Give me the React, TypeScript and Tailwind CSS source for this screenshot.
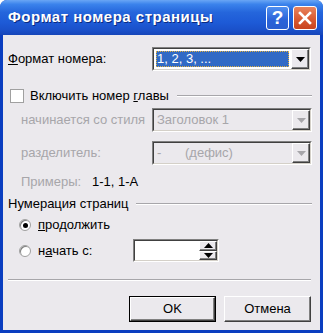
import React from 'react';

const sunken = 'border-t-[#808080] border-l-[#808080] border-b-white border-r-white border';
const raised = 'border border-t-white border-l-white border-b-[#404040] border-r-[#404040] shadow-[inset_-1px_-1px_0_#808080]';

const Arrow = ({ color = '#000' }: { color?: string }) => (
  <svg width="9" height="5" viewBox="0 0 9 5"><path d="M0 0h9L4.5 5z" fill={color} /></svg>
);

const Combo = ({ text, width, active, disabled }: { text: React.ReactNode; width: string; active?: boolean; disabled?: boolean }) => (
  <div className={`${width} h-[24px] ${sunken} bg-white`}>
    <div className="h-full flex border border-t-[#404040] border-l-[#404040] border-b-[#d4d0c8] border-r-[#d4d0c8]">
      <div className={`flex-1 flex items-center p-[2px] ${disabled ? 'bg-[#ebe9ed]' : 'bg-white'}`}>
        <div className={`h-full w-full flex items-center pl-[1px] ${active ? 'bg-[#316ac5] text-white outline-1 outline-dotted outline-[#e0b040] -outline-offset-1' : ''} ${disabled ? 'text-[#a7a6aa]' : ''}`}>{text}</div>
      </div>
      <div className={`w-[18px] ${raised} bg-[#ebe9ed] flex items-center justify-center`}>
        <Arrow color={disabled ? '#a7a6aa' : '#000'} />
      </div>
    </div>
  </div>
);

const Line = () => (
  <div className="flex-1 h-[2px] border-t border-t-[#a7a6aa] border-b border-b-white" />
);

const Radio = ({ checked }: { checked?: boolean }) => (
  <div className="w-[12px] h-[12px] rounded-full border border-[#a0a0a0] bg-white flex items-center justify-center shadow-[inset_1px_1px_0_#808080]">
    {checked && <div className="w-[5px] h-[5px] rounded-full bg-black" />}
  </div>
);

export default function App() {
  return (
    <div className="w-[323px] h-[333px] bg-white" style={{ fontFamily: '"Liberation Sans", Arial, sans-serif' }}>
      <div className="w-full h-full flex flex-col rounded-t-[7px] overflow-hidden bg-[#0a3ec0]">
        <div className="h-[35px] shrink-0 flex items-center pl-[8px] pr-[6px] bg-[linear-gradient(180deg,#6aa6f5_0%,#3b83ec_12%,#2566dc_35%,#1d5ad6_65%,#1a4fc8_88%,#1645b8_100%)]">
          <span className="flex-1 text-white font-bold text-[15px] tracking-[0.5px] [text-shadow:1px_1px_0_#0a2a80]">Формат номера страницы</span>
          <div className="flex gap-[4px]">
            <div className="w-[23px] h-[24px] rounded-[3px] border border-white bg-[linear-gradient(180deg,#4f8ff0,#2a62d8_60%,#2a5fd0)] flex items-center justify-center text-white font-bold text-[19px] leading-none">?</div>
            <div className="w-[24px] h-[24px] rounded-[3px] border border-white bg-[linear-gradient(180deg,#e8835d,#d95a32_55%,#c8431f)] flex items-center justify-center">
              <svg width="14" height="14" viewBox="0 0 14 14"><path d="M2 2l10 10M12 2L2 12" stroke="#fff" strokeWidth="2.6" strokeLinecap="square" /></svg>
            </div>
          </div>
        </div>
        <div className="flex-1 mx-[3px] mb-[3px] bg-[#ebe9ed] text-[13px] text-black flex flex-col pl-[5px] pr-[8px] pt-[12px]">
          <div className="flex items-center h-[24px]">
            <span className="w-[144px]"><u>Ф</u>ормат номера:</span>
            <Combo width="w-[159px]" active text="1, 2, 3, ..." />
          </div>
          <div className="flex items-center h-[20px] mt-[15px] pl-[2px]">
            <div className={`w-[14px] h-[14px] bg-white border border-[#a0a0a0]`} />
            <span className="ml-[6px] mr-[8px]">Включить номер <u>г</u>лавы</span>
            <Line />
          </div>
          <div className="flex items-center h-[22px] mt-[3px]">
            <span className="w-[144px] pl-[13px] text-[#a7a6aa]">начинается со стиля</span>
            <Combo width="w-[160px]" disabled text="Заголовок 1" />
          </div>
          <div className="flex items-center h-[22px] mt-[11px]">
            <span className="w-[144px] pl-[13px] text-[#a7a6aa]">разделитель:</span>
            <Combo width="w-[160px]" disabled text={<><span className="w-[28px]">-</span><span>(дефис)</span></>} />
          </div>
          <div className="flex items-center h-[16px] mt-[10px] pl-[13px]">
            <span className="w-[71px] text-[#a7a6aa]">Примеры:</span>
            <span>1-1, 1-А</span>
          </div>
          <div className="flex items-center h-[16px] mt-[6px]">
            <span className="mr-[7px]">Нумерация страниц</span>
            <Line />
          </div>
          <div className="flex items-center h-[16px] mt-[5px] pl-[11px]">
            <Radio checked />
            <span className="ml-[7px]"><u>п</u>родолжить</span>
          </div>
          <div className="flex items-center h-[23px] mt-[6px] pl-[11px]">
            <Radio />
            <span className="ml-[7px] w-[95px]">н<u>а</u>чать с:</span>
            <div className={`w-[86px] h-[23px] ${sunken} bg-white`}>
              <div className="h-full flex border border-t-[#404040] border-l-[#404040] border-b-[#d4d0c8] border-r-[#d4d0c8]">
                <div className="flex-1" />
                <div className="w-[18px] flex flex-col">
                  <div className={`flex-1 ${raised} bg-[#ebe9ed] flex items-center justify-center`}>
                    <svg width="9" height="5" viewBox="0 0 9 5"><path d="M0 5h9L4.5 0z" fill="#000" /></svg>
                  </div>
                  <div className={`flex-1 ${raised} bg-[#ebe9ed] flex items-center justify-center`}>
                    <Arrow />
                  </div>
                </div>
              </div>
            </div>
          </div>
          <div className="flex mt-[17px] pr-[1px]">
            <Line />
          </div>
          <div className="flex justify-end gap-[8px] mt-[15px] pr-[1px]">
            <div className="w-[87px] h-[26px] border border-black">
              <div className={`h-full ${raised} flex items-center justify-center`}>OK</div>
            </div>
            <div className={`w-[87px] h-[26px] ${raised} flex items-center justify-center`}>Отмена</div>
          </div>
        </div>
      </div>
    </div>
  );
}
